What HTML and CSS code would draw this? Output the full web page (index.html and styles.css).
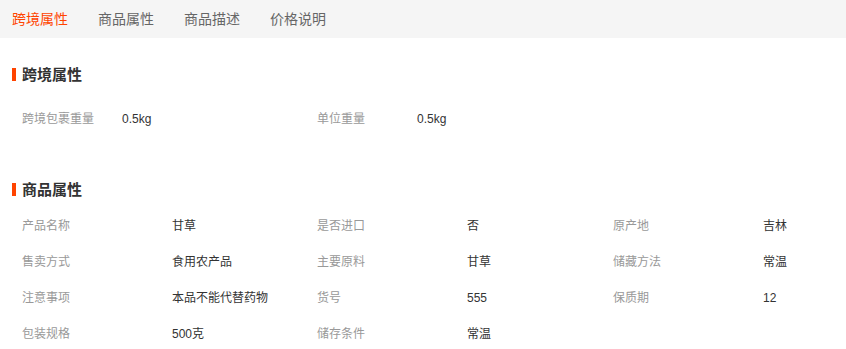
FILE: index.html
```html
<!DOCTYPE html>
<html lang="zh-CN">
<head>
    <meta charset="UTF-8">
    <meta name="viewport" content="width=device-width, initial-scale=1.0">
    <title>商品详情</title>
    <link rel="stylesheet" href="styles.css">
</head>
<body>
    <div class="tabs">
        <span class="tab active">跨境属性</span>
        <span class="tab">商品属性</span>
        <span class="tab">商品描述</span>
        <span class="tab">价格说明</span>
    </div>

    <div class="section section-cross">
        <h2 class="section-title">跨境属性</h2>
        <div class="attr-list attr-list-narrow">
            <div class="attr"><span class="attr-name">跨境包裹重量</span><span class="attr-value">0.5kg</span></div>
            <div class="attr"><span class="attr-name">单位重量</span><span class="attr-value">0.5kg</span></div>
        </div>
    </div>

    <div class="section section-goods">
        <h2 class="section-title">商品属性</h2>
        <div class="attr-list">
            <div class="attr"><span class="attr-name">产品名称</span><span class="attr-value">甘草</span></div>
            <div class="attr"><span class="attr-name">是否进口</span><span class="attr-value">否</span></div>
            <div class="attr"><span class="attr-name">原产地</span><span class="attr-value">吉林</span></div>
            <div class="attr"><span class="attr-name">售卖方式</span><span class="attr-value">食用农产品</span></div>
            <div class="attr"><span class="attr-name">主要原料</span><span class="attr-value">甘草</span></div>
            <div class="attr"><span class="attr-name">储藏方法</span><span class="attr-value">常温</span></div>
            <div class="attr"><span class="attr-name">注意事项</span><span class="attr-value">本品不能代替药物</span></div>
            <div class="attr"><span class="attr-name">货号</span><span class="attr-value">555</span></div>
            <div class="attr"><span class="attr-name">保质期</span><span class="attr-value">12</span></div>
            <div class="attr"><span class="attr-name">包装规格</span><span class="attr-value">500克</span></div>
            <div class="attr"><span class="attr-name">储存条件</span><span class="attr-value">常温</span></div>
        </div>
    </div>
</body>
</html>
```

FILE: styles.css
```css
body {
    margin: 0;
    font-family: "Liberation Sans", "Noto Sans CJK SC", sans-serif;
    font-size: 12px;
    color: #333;
    background: #fff;
    overflow: hidden;
}
.tabs {
    display: flex;
    gap: 30px;
    height: 38px;
    padding-left: 12px;
    background-color: #f5f5f5;
    line-height: 38px;
    font-size: 14px;
}
.tab {
    color: #666;
    cursor: pointer;
}
.tab.active {
    color: #ff4400;
}
.section-cross {
    padding-top: 27px;
}
.section-goods {
    padding-top: 43px;
}
.section-title {
    margin: 3px 0 4px 12px;
    padding-left: 6px;
    border-left: 4px solid #ff4400;
    height: 13px;
    line-height: 13px;
    font-size: 15px;
    font-weight: bold;
    color: #333;
}
.attr-list {
    display: grid;
    grid-template-columns: 295px 296px 1fr;
    padding-left: 22px;
    margin-top: 12px;
}
.attr-list-narrow {
    margin-top: 20px;
}
.attr {
    display: flex;
    height: 36px;
    line-height: 36px;
}
.attr-name {
    width: 150px;
    flex-shrink: 0;
    color: #999;
}
.attr-list-narrow .attr-name {
    width: 100px;
}
.attr-value {
    color: #333;
}
```
